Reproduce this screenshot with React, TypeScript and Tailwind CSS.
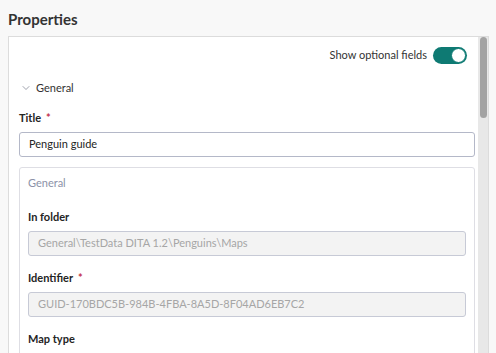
import { ChevronDown } from 'lucide-react'

function Label({ text, required }: { text: string; required?: boolean }) {
  return (
    <div className="text-[11px] font-bold leading-[16px] text-[#242424]">
      {text}
      {required && <span className="ml-[5px] text-[#c4314b]">*</span>}
    </div>
  )
}

function ReadOnlyInput({ value }: { value: string }) {
  return (
    <div className="mt-[6px] flex h-[25px] items-center rounded-[3px] border border-[#c7cad6] bg-[#f3f3f3] px-[9px] text-[11px] text-[#a6a6a6]">
      {value}
    </div>
  )
}

export default function App() {
  return (
    <div className="h-[353px] w-[496px] overflow-hidden bg-[#f8f8f8] font-['Lato',sans-serif] text-[#242424]">
      <h1 className="px-2 pt-[8px] text-[15px] font-bold leading-[22px] text-[#333]">Properties</h1>
      <div className="ml-2 mt-[6px] flex h-[400px] w-[481px] border border-[#dcdcdc] bg-white">
        <div className="flex-1 pl-[10px] pr-[3px]">
          <div className="flex items-center justify-end gap-[6px] pr-[8px] pt-[10px]">
            <span className="text-[11px] text-[#333]">Show optional fields</span>
            <div className="flex h-[17px] w-[34px] items-center justify-end rounded-full bg-[#0e7a73] p-[1px]">
              <div className="h-[15px] w-[15px] rounded-full border border-[#0e7a73] bg-white" />
            </div>
          </div>
          <div className="mt-[16px] flex h-[16px] items-center gap-[4px] pl-[1px]">
            <ChevronDown className="h-[12px] w-[12px] text-[#6b7080]" strokeWidth={1.3} />
            <span className="text-[11px] text-[#333]">General</span>
          </div>
          <div className="mt-[14px]">
            <Label text="Title" required />
            <div className="mt-[6px] flex h-[25px] items-center rounded-[3px] border border-[#b4b8c8] bg-white px-[9px] text-[11px] text-[#242424]">
              Penguin guide
            </div>
          </div>
          <div className="mt-[10px] rounded-[3px] border border-[#dedee4] px-[8px] pb-4 pt-[7px]">
            <div className="text-[11px] leading-[16px] text-[#8c92a8]">General</div>
            <div className="mt-[18px]">
              <Label text="In folder" />
              <ReadOnlyInput value="General\TestData DITA 1.2\Penguins\Maps" />
            </div>
            <div className="mt-[14px]">
              <Label text="Identifier" required />
              <ReadOnlyInput value="GUID-170BDC5B-984B-4FBA-8A5D-8F04AD6EB7C2" />
            </div>
            <div className="mt-[14px]">
              <Label text="Map type" />
              <ReadOnlyInput value="" />
            </div>
          </div>
        </div>
        <div className="w-[10px] bg-[#e8e8e8]">
          <div className="mx-auto h-[81px] w-[7px] rounded-full bg-[#a3a3a3]" />
        </div>
      </div>
    </div>
  )
}
